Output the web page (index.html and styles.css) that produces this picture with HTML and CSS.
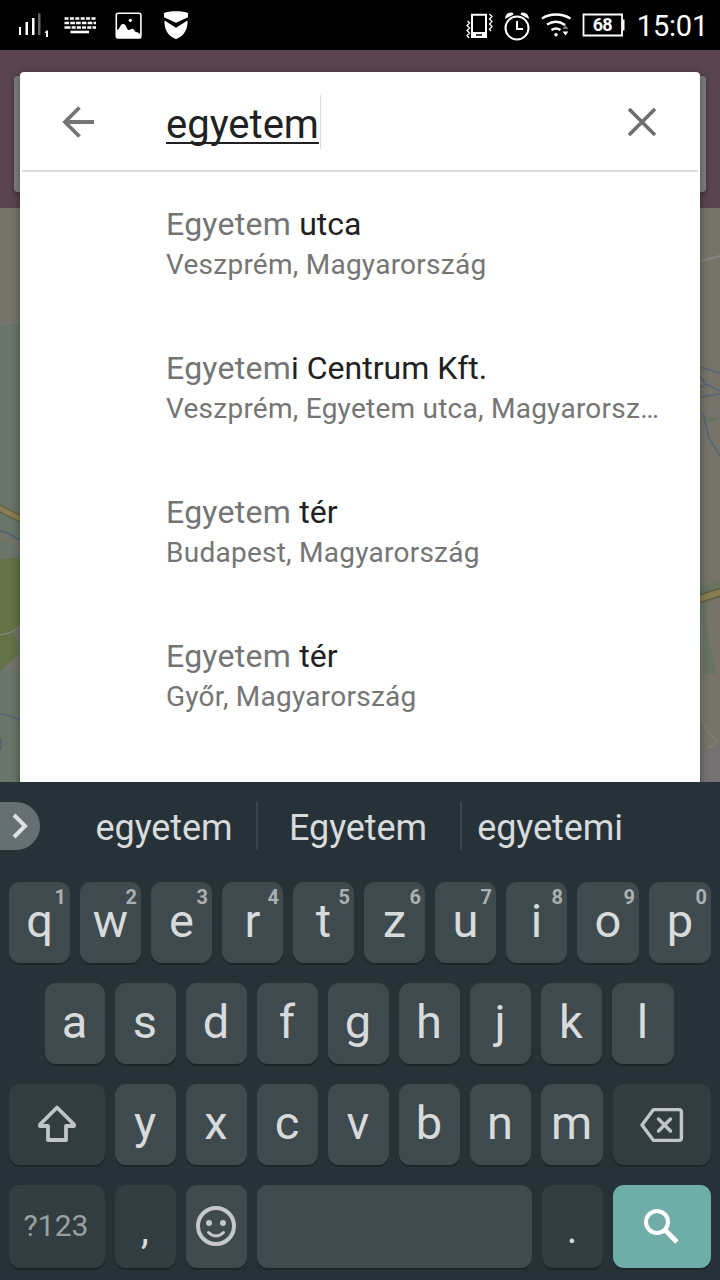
FILE: index.html
```html
<!DOCTYPE html>
<html lang="hu">
<head>
<meta charset="utf-8">
<title>Keresés</title>
<link rel="stylesheet" href="styles.css">
</head>
<body>
<header class="status">
  <svg class="status-icons" width="210" height="50" viewBox="0 0 210 50" fill="#fff">
    <path d="M19 27h2v8h-2zM25.500 22h2.500v13h-2.500zM32 18h2.500v17h-2.500z"/>
    <path fill="#666" d="M38 13.500h2.500V35H38z"/>
    <path d="M44.500 32.500 46.500 30.500h1.500V37h-2v-4z"/>
    <g fill="none" stroke="#fff" stroke-width="2.600">
      <path stroke-dasharray="4 1.400" d="M64.500 18.500h31.500"/>
      <path stroke-dasharray="4.600 1.200" d="M64.500 23h31.500"/>
      <path stroke-dasharray="6 1.200 4 1.200 4 1.200 4 1.200 4 1.200" d="M64.500 27.500h31.500"/>
      <path d="M70.500 32H89"/>
    </g>
    <rect x="116.300" y="13.300" width="24.600" height="24.600" rx="2" fill="none" stroke="#fff" stroke-width="1.600"/>
    <path d="M117 30c3-1 3-6 6-6 4 0 3 6 6 6 2 0 2-2 4-1s2 4 4 3l3 2v4h-23z"/>
    <circle cx="130.300" cy="20.300" r="1.600"/>
    <path d="M164 13c4-2.500 20-2.500 24 0v4.300l-12 5.500-12-5.500z"/>
    <path d="M164.500 20.500 176 27.800l11.500-7.300c.4 7-2 15-11.500 18.700-9.500-3.700-11.900-11.700-11.500-18.700z"/>
  </svg>
  <div class="status-right">
    <svg class="status-icons" width="160" height="50" viewBox="464 0 160 50" fill="none" stroke="#fff">
      <path stroke-width="2" d="M472 14.800h14V37h-14z"/>
      <path fill="#fff" stroke="none" d="M471 32h16v6h-16z"/>
      <path stroke="#000" stroke-width="1.500" d="M476 35h6"/>
      <path stroke-width="1.300" d="m467.500 21 2 2-2.500 2.500 2.500 2.500-2.500 2.500 2.500 2.500-2.500 2.500 2 2.500M489.500 14l2.500 2.500-2.500 2.500 2.500 2.500-2.500 2.500 2.500 2.500-2.500 2.500 1.500 2"/>
      <circle cx="517" cy="28" r="11.500" stroke-width="2"/>
      <path stroke-width="2" d="M517 21v8h6"/>
      <path fill="#fff" stroke="none" d="M505 19c0-4 3-7 7.500-6.500l1 2zM529 19c0-4-3-7-7.500-6.500l-1 2z"/>
      <path stroke-width="2.400" d="M542 18.500c8-5.300 20-5.300 28.500 0M547 24.500c6-3.700 12-3.700 18 .5M551.500 30c3-2 6-2 9 0"/>
      <circle cx="556" cy="34.800" r="1.800" fill="#fff" stroke="none"/>
      <path fill="#777" stroke="none" d="m562.500 29 3-4 2.800 4z"/>
      <path fill="#fff" stroke="none" d="m562.500 31.500 3 4 2.800-4z"/>
      <path stroke-width="1.800" d="M583.500 14.500H622V35.500h-38.500z"/>
      <path fill="#fff" stroke="none" d="M622.500 19.500h2v11h-2z"/>
      <text class="battery" x="602.300" y="31.400" text-anchor="middle">68</text>
    </svg>
    <span class="clock">15:01</span>
  </div>
</header>

<main class="screen">
  <svg class="map" width="720" height="732" viewBox="0 50 720 732" fill="none">
    <path fill="#767469" d="M0 50h720v732H0z"/>
    <path fill="#6a7569" d="m0 325 20-3v460H0z"/>
    <path stroke="#777d7d" d="m0 325 20-3"/>
    <path stroke="#625b3e" stroke-width="7" d="m-1 508 22 11"/>
    <path stroke="#887d53" stroke-width="5" d="m-1 508 22 11"/>
    <path fill="#747468" d="m0 532 20 9v8L0 538z"/>
    <path stroke="#4d6272" stroke-width="1.500" d="M0 531c8 0 12 6 20 9"/>
    <path fill="#637247" d="M0 560c7-3 13-2 20-1v68l-6 6 6 20-20 18z"/>
    <path fill="#747269" d="m14 632 6-5v16zM20 653v16q-9-1-18 1z"/>
    <path stroke="#8c9087" d="M0 635q13-2 21-9"/>
    <path stroke="#4d6272" stroke-width="1.500" d="M0 714c8 0 12 3 20 6M0 739q3 5 0 11"/>
    <path stroke="#868581" stroke-width="2" d="m700 261 20-5"/>
    <path stroke="#536576" stroke-width="1.500" d="m700 367 20 6M700 376l6 8 14 7M700 388l6-4M700 397l20-3M703 413l6 25 11 18"/>
    <path stroke="#77737a" d="m700 412 20-2"/>
    <path fill="#67715f" d="M707 420q5-4 12-2-4 5-12 3z"/>
    <path fill="#687462" d="m700 587 20-8v14l-14 6 1 30 9 45h-13l-3-72z"/>
    <path stroke="#625b3e" stroke-width="9" d="m699 599 22-7"/>
    <path stroke="#887d53" stroke-width="6" d="m699 599 22-7"/>
    <path stroke="#82857f" d="M702 604v112q2 17 15 24l-3 5-7 3"/>
    <path fill="#747272" d="M704 753l16-8v37h-20v-29z"/>
    <path fill="#59444f" d="M0 50h720v158H0z"/>
    <rect class="old-card" x="14" y="76" width="692" height="116" rx="4" fill="#7e7e7e"/>
  </svg>
  <section class="dialog">
    <div class="search">
      <svg width="32" height="32" viewBox="62 106 32 32" fill="none" stroke="#757575" stroke-width="3.800"><path d="M94 122H65M79.500 107.500 65 122l14.500 14.500"/></svg>
      <div class="query"><span>egyetem</span></div>
      <svg width="28" height="28" viewBox="628 108 28 28" fill="none" stroke="#6e6e6e" stroke-width="3.600"><path d="m629 109 26 26m0-26-26 26"/></svg>
    </div>
    <ul class="results">
      <li><p class="name">Egyetem <b>utca</b></p><p class="place">Veszprém, Magyarország</p></li>
      <li><p class="name">Egyetem<b>i Centrum Kft.</b></p><p class="place">Veszprém, Egyetem utca, Magyarorsz…</p></li>
      <li><p class="name">Egyetem <b>tér</b></p><p class="place">Budapest, Magyarország</p></li>
      <li><p class="name">Egyetem <b>tér</b></p><p class="place">Győr, Magyarország</p></li>
    </ul>
  </section>
</main>

<section class="keyboard">
  <div class="suggestions">
    <div class="expand"><svg width="40" height="48" viewBox="0 0 40 48" fill="none" stroke="#dfe1e2" stroke-width="4"><path d="m14 13 11 11-11 11"/></svg></div>
    <span>egyetem</span><span>Egyetem</span><span>egyetemi</span>
  </div>
  <div class="row row-top">
    <div class="key">q<sup>1</sup></div><div class="key">w<sup>2</sup></div><div class="key">e<sup>3</sup></div><div class="key">r<sup>4</sup></div><div class="key">t<sup>5</sup></div><div class="key">z<sup>6</sup></div><div class="key">u<sup>7</sup></div><div class="key">i<sup>8</sup></div><div class="key">o<sup>9</sup></div><div class="key">p<sup>0</sup></div>
  </div>
  <div class="row row-home">
    <div class="key">a</div><div class="key">s</div><div class="key">d</div><div class="key">f</div><div class="key">g</div><div class="key">h</div><div class="key">j</div><div class="key">k</div><div class="key">l</div>
  </div>
  <div class="row row-lower">
    <div class="key dark"><svg width="40" height="40" viewBox="37 1105 40 40" fill="none" stroke="#c0c5c7" stroke-width="3.800" stroke-linejoin="round"><path d="m57 1107.500 17 17v1.500h-8v14H48v-14h-8v-1.500z"/></svg></div>
    <div class="key">y</div><div class="key">x</div><div class="key">c</div><div class="key">v</div><div class="key">b</div><div class="key">n</div><div class="key">m</div>
    <div class="key dark"><svg width="44" height="36" viewBox="640 1108 44 36" fill="none" stroke="#c0c5c7" stroke-width="3.400" stroke-linejoin="round"><path d="M653.500 1110.600H679q2.400 0 2.400 2.400v26q0 2.400-2.400 2.400h-25.500l-11.500-15.400z"/><path stroke-linecap="round" d="m658.500 1120 12 12m0-12-12 12"/></svg></div>
  </div>
  <div class="row row-bottom">
    <div class="key dark mode">?123</div>
    <div class="key dark mark">,</div>
    <div class="key emoji"><svg width="40" height="40" viewBox="196 1206 40 40" fill="none" stroke="#c4c8ca" stroke-width="4"><circle cx="216" cy="1226" r="18"/><path stroke-width="3" stroke-linecap="round" d="M208.500 1232.500q7.500 7 15 0"/><circle cx="209" cy="1223" r="3" fill="#c4c8ca" stroke="none"/><circle cx="223" cy="1223" r="3" fill="#c4c8ca" stroke="none"/></svg></div>
    <div class="key"></div>
    <div class="key dark mark">.</div>
    <div class="key go"><svg width="36" height="36" viewBox="644 1208 36 36" fill="none" stroke="#fff" stroke-width="4"><circle cx="657" cy="1221" r="11"/><path stroke-width="4.800" d="m665 1229 12 12"/></svg></div>
  </div>
</section>
</body>
</html>
```
FILE: styles.css
```css
* { box-sizing: border-box; margin: 0; padding: 0; }
body {
  width: 720px;
  height: 1280px;
  overflow: hidden;
  display: flex;
  flex-direction: column;
  font-family: Roboto, "Noto Sans", sans-serif;
  background: #263238;
}
svg { display: block; flex: none; }

.status {
  height: 50px;
  background: #000;
  color: #fff;
  display: flex;
  justify-content: space-between;
}
.status-right { display: flex; padding-right: 12px; }
.status-icons { overflow: visible; }
.battery { font-size: 18px; font-weight: 700; fill: #fff; stroke: none; letter-spacing: -.8px; }
.clock { width: 84px; text-align: right; font-size: 29px; letter-spacing: -.2px; line-height: 53px; }

.screen {
  position: relative;
  height: 732px;
  padding: 22px 20px 0;
  overflow: hidden;
}
.map { position: absolute; top: 0; left: 0; }
.old-card { filter: drop-shadow(0 2px 2px rgba(0, 0, 0, .3)); }
.dialog {
  position: relative;
  height: 740px;
  background: #fff;
  border-radius: 4px;
  box-shadow: 0 2px 10px rgba(0, 0, 0, .4);
}
.search {
  height: 100px;
  margin: 0 2px;
  padding: 0 42px 0 40px;
  border-bottom: 2px solid #dedede;
  display: flex;
  align-items: center;
}
.search > svg { margin-top: 2px; }
.query {
  flex: 1;
  margin-left: 72px;
  padding-top: 2px;
  display: flex;
}
.query span {
  height: 54px;
  padding-right: 1px;
  border-right: 1px solid #ddd;
  font-size: 40px;
  line-height: 60px;
  color: #212121;
  text-decoration: underline;
  text-decoration-thickness: 2px;
  text-decoration-skip-ink: none;
  text-underline-offset: 4px;
}
.results { list-style: none; padding: 32px 0 0 146px; }
.results li { height: 144px; white-space: nowrap; }
.name { font-size: 32px; line-height: 40px; letter-spacing: .25px; color: #757575; }
.name b { font-weight: 400; letter-spacing: 0; color: #212121; }
.place { font-size: 28px; line-height: 42px; letter-spacing: .25px; color: #757575; }

.keyboard { height: 498px; display: flex; flex-direction: column; gap: 20px; color: #d8dbdc; }
.suggestions {
  height: 80px;
  padding-top: 20px;
  display: grid;
  grid-template-columns: 72px 186px 204px 178px;
  font-size: 36px;
  line-height: 52px;
  letter-spacing: -.1px;
  text-align: center;
}
.suggestions span { height: 48px; padding-right: 2px; border-right: 2px solid #3a464b; }
.suggestions span:nth-child(2) { padding-right: 0; }
.suggestions span:last-child { border: 0; }
.expand { width: 40px; height: 48px; border-radius: 0 24px 24px 0; background: #667074; }
.row { height: 81px; padding: 0 9px; display: grid; gap: 10px; }
.row-top { grid-template-columns: repeat(8, 61px) 62px 62px; }
.row-home { grid-template-columns: 60px repeat(7, 61px) 62px; padding: 0 45px; }
.row-lower { grid-template-columns: 96px repeat(6, 61px) 62px 98px; }
.row-bottom { height: 83px; grid-template-columns: 96px 61px 61px 275px 61px 98px; }
.key {
  position: relative;
  display: flex;
  align-items: center;
  justify-content: center;
  border-radius: 11px;
  background: #3f4a4e;
  box-shadow: 0 2px 0 #1c262a;
  font-size: 47px;
  line-height: 48px;
  padding: 0 1px 4px 0;
}
.row-top .key { padding-right: 0; }
.key svg { margin-top: 4px; }
.key sup {
  position: absolute;
  top: 5px;
  right: 4px;
  font-size: 20px;
  line-height: 20px;
  font-weight: 700;
  color: #abb0b2;
}
.dark { background: #323d41; }
.row .mode { padding: 0 2px 1px 0; font-size: 30px; color: #98a0a2; }
.mark { font-size: 40px; padding-top: 11px; }
.row .emoji { padding: 0 2px 6px 0; }
.go { background: #6fada8; }
```
